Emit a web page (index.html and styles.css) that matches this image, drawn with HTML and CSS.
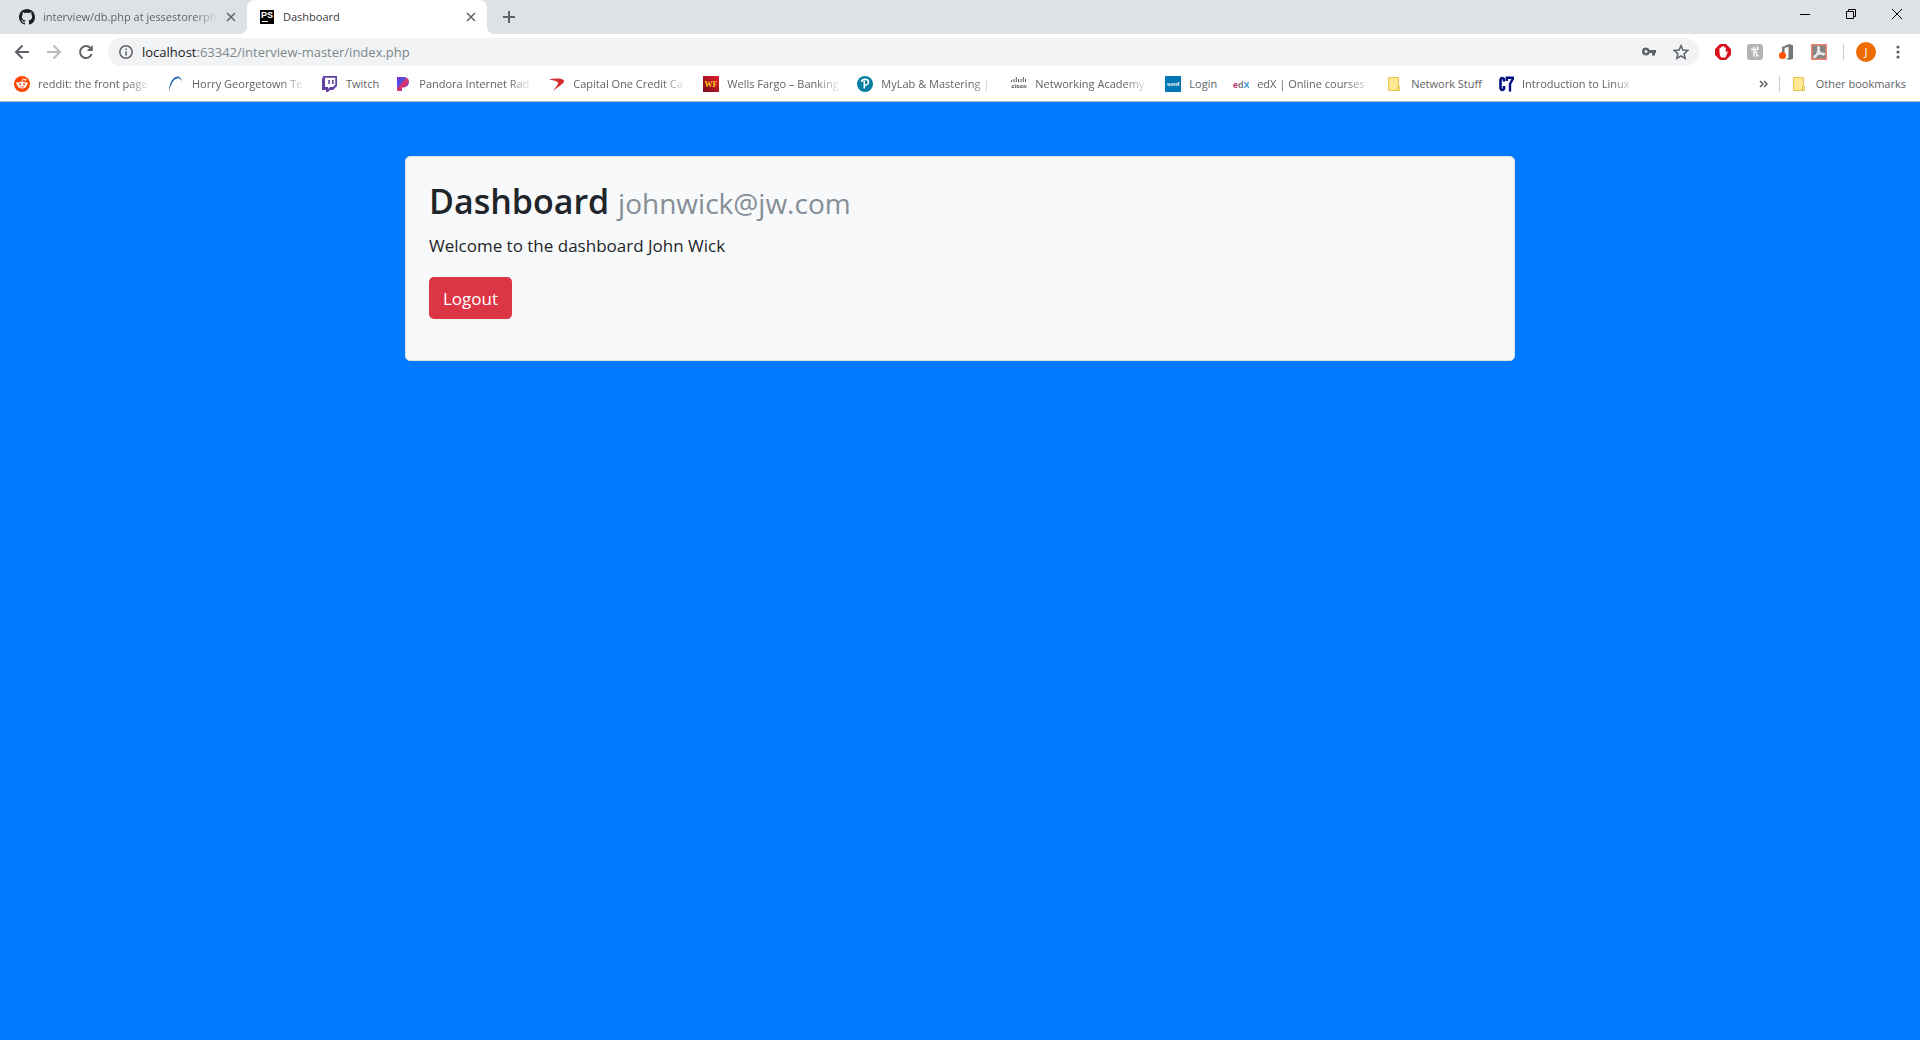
FILE: index.html
```html
<!DOCTYPE html>
<html lang="en">
<head>
<meta charset="utf-8">
<title>Dashboard</title>
<link rel="stylesheet" href="styles.css">
</head>
<body>
<header class="browser">
  <div class="tabstrip">
    <div class="tab">
      <svg class="icon" viewBox="0 0 16 16" aria-hidden="true"><path fill="#1b1f23" d="M8 0C3.580 0 0 3.580 0 8c0 3.540 2.290 6.530 5.470 7.590.4.070.55-.17.55-.38 0-.19-.01-.82-.01-1.490-2.010.37-2.530-.49-2.690-.94-.09-.23-.48-.94-.82-1.130-.28-.15-.68-.52-.01-.53.63-.01 1.080.58 1.230.82.72 1.210 1.870.87 2.330.66.070-.52.28-.87.51-1.070-1.780-.2-3.640-.89-3.640-3.950 0-.87.31-1.590.82-2.150-.08-.2-.36-1.020.08-2.120 0 0 .67-.21 2.200.82.64-.18 1.320-.27 2-.27s1.360.09 2 .27c1.530-1.040 2.200-.82 2.200-.82.44 1.100.16 1.920.08 2.120.51.56.82 1.270.82 2.150 0 3.070-1.870 3.750-3.650 3.950.29.25.54.73.54 1.480 0 1.070-.01 1.930-.01 2.200 0 .21.15.46.55.38A8.010 8.010 0 0 0 16 8c0-4.420-3.580-8-8-8z"/></svg>
      <span class="tab-title fade">interview/db.php at jessestorerph</span>
      <button class="tab-close" aria-label="Close tab"><svg width="10" height="10" viewBox="0 0 10 10"><path d="M1 1l8 8M9 1L1 9"/></svg></button>
    </div>
    <div class="tab tab-active">
      <svg class="icon" viewBox="0 0 16 16" aria-hidden="true"><path d="M1 1h14v14H1z"/><path d="M3 12.500h6" stroke="#fff"/><text class="ps" x="2" y="9">PS</text></svg>
      <span class="tab-title">Dashboard</span>
      <button class="tab-close" aria-label="Close tab"><svg width="10" height="10" viewBox="0 0 10 10"><path d="M1 1l8 8M9 1L1 9"/></svg></button>
    </div>
    <button class="new-tab" aria-label="New tab"><svg width="12" height="12" viewBox="0 0 12 12"><path d="M6 0v12M0 6h12"/></svg></button>
    <div class="window-controls">
      <button aria-label="Minimize"><svg width="10" height="10" viewBox="0 0 10 10"><path d="M0 5.500h10"/></svg></button>
      <button aria-label="Restore"><svg width="10" height="10" viewBox="0 0 10 10"><path d="M.5 2.500h7v7h-7zM2.500 2.500v-2h7v7h-2"/></svg></button>
      <button aria-label="Close"><svg width="10" height="10" viewBox="0 0 10 10"><path d="M0 0l10 10M10 0L0 10"/></svg></button>
    </div>
  </div>

  <div class="toolbar">
    <nav class="history">
      <button aria-label="Back"><svg width="16" height="16" viewBox="0 0 16 16"><path d="M15 8H2M8.500 1.500L2 8l6.500 6.500"/></svg></button>
      <button class="disabled" aria-label="Forward"><svg width="16" height="16" viewBox="0 0 16 16"><path d="M1 8h13M7.500 1.500L14 8l-6.500 6.500"/></svg></button>
      <button aria-label="Reload"><svg width="16" height="16" viewBox="0 0 16 16"><path d="M13.700 10A6 6 0 1 1 12.500 4"/><path d="M14.800 1v6H8.800z" class="solid"/></svg></button>
    </nav>
    <div class="omnibox">
      <svg class="info" width="14" height="14" viewBox="0 0 14 14" aria-hidden="true"><circle cx="7" cy="7" r="6.200"/><path d="M7 6.200v4.300M7 3.500V5"/></svg>
      <a class="url" href="#"><span class="host">localhost</span>:63342/interview-master/index.php</a>
      <button aria-label="Saved passwords"><svg width="16" height="16" viewBox="0 0 16 16"><path class="solid" fill-rule="evenodd" d="M5 3.500a4 4 0 1 0 3.700 5.500H11v2.500h3V9h1V6H8.700A4 4 0 0 0 5 3.500zM5 6a1.500 1.500 0 1 1 0 3 1.500 1.500 0 0 1 0-3z"/></svg></button>
      <button aria-label="Bookmark this page"><svg width="16" height="16" viewBox="0 0 16 16"><path class="thin" d="M8 1.600l1.900 4.500 4.900.4-3.700 3.200 1.100 4.700L8 11.900l-4.200 2.500 1.100-4.700L1.200 6.500l4.900-.4z"/></svg></button>
    </div>
    <div class="extensions">
      <button aria-label="Ad blocker"><svg width="16" height="16" viewBox="0 0 16 16"><path fill="#d8131b" d="M5 0h6l5 5v6l-5 5H5l-5-5V5z"/><path fill="#fff" d="M4.500 8V4.200q.8-1 1.500 0V3q.8-1 1.600 0v-.4q.8-1 1.600 0V3.500q.8-.8 1.600.2v5l1.200-1.400q1.100 0 .7 1L10.500 13.500H6.200Q4.500 12 4.500 8z"/></svg></button>
      <button aria-label="Coupons"><svg width="16" height="16" viewBox="0 0 16 16"><rect width="16" height="16" rx="3" fill="#b3b4b6"/><path fill="none" stroke="#fff" stroke-width="1.400" d="M4 5.500h6.500q1.500-2.200-.7-2.200M7 3v9.500M7 9q2.700-2 2.700 0v2.800h1.800"/></svg></button>
      <button aria-label="Office"><svg width="16" height="16" viewBox="0 0 16 16"><path fill="#777" d="M3 3L10 0l4 1.200v13.500L10 16l-3-1.500 2.500-.5V2.800L5.500 4v5L3 10z"/><circle cx="3.500" cy="11.500" r="3.500" fill="#ff5200"/></svg></button>
      <button aria-label="PDF"><svg width="16" height="16" viewBox="0 0 16 16"><path fill="#858585" stroke="#ef8172" d="M.5.500h15v15H.5z"/><path fill="none" stroke="#eee" d="M7.500 3c-1 0 0 3.500 1.500 5.500s4 2.500 4 1.500-6-.5-8.500 1.500-.5 2 .5.700S8.800 3 7.500 3z"/></svg></button>
    </div>
    <span class="divider"></span>
    <button class="avatar" aria-label="Profile">J</button>
    <button class="menu" aria-label="Menu"><svg width="4" height="14" viewBox="0 0 4 14"><circle cx="2" cy="2" r="1.600"/><circle cx="2" cy="7" r="1.600"/><circle cx="2" cy="12" r="1.600"/></svg></button>
  </div>

  <nav class="bookmarks">
    <a href="#"><svg class="icon" viewBox="0 0 16 16"><circle cx="8" cy="8" r="8" fill="#ff4500"/><path d="M8.200 5.500l.6-2.500 2.500.6" fill="none" stroke="#fff" stroke-width=".8"/><circle cx="11.500" cy="3.700" r="1" fill="#fff"/><circle cx="3.500" cy="7.500" r="1.300" fill="#fff"/><circle cx="12.500" cy="7.500" r="1.300" fill="#fff"/><ellipse cx="8" cy="9" rx="4.800" ry="3.500" fill="#fff"/><circle cx="6" cy="8.300" r="1" fill="#ff4500"/><circle cx="10" cy="8.300" r="1" fill="#ff4500"/><path d="M6 10.600q2 1.200 4 0" fill="none" stroke="#ff4500" stroke-width=".7"/></svg><span class="fade">reddit: the front page</span></a>
    <a href="#"><svg class="icon" viewBox="0 0 16 16"><path fill="#1f62ad" d="M1 15.500C1 7 5 1 9.500.5c2.500 0 4 2 4.500 5C12.500 2.500 11 2 9 2.500 5.500 3.200 3 8 1 15.500z"/></svg><span class="fade">Horry Georgetown Te</span></a>
    <a href="#"><svg class="icon" viewBox="0 0 16 16"><path fill="#6441a4" fill-rule="evenodd" d="M1.300 0H15v10l-4 4H8l-2 2H4v-2H0V3zM3 1.800V11h3v2l2-2h3l2.300-2.300V1.800zM6.300 4h1.600v4H6.300zM10 4h1.600v4H10z"/></svg><span>Twitch</span></a>
    <a href="#"><svg class="icon" viewBox="0 0 16 16"><defs><linearGradient id="pandora" x2="1" y2="1"><stop stop-color="#7b2fd0"/><stop offset=".35" stop-color="#4a50e0"/><stop offset=".5" stop-color="#ee2f5b"/><stop offset=".7" stop-color="#a0369c"/><stop offset="1" stop-color="#3478ef"/></linearGradient></defs><path fill="url(#pandora)" d="M2 1h6c4 0 6 2 6 5s-2.500 5.500-6 5.500H7V15H2z"/></svg><span class="fade">Pandora Internet Rad</span></a>
    <a href="#"><svg class="icon" viewBox="0 0 16 16"><path fill="#d22e2f" d="M0 3.200C6 2 14 2 15 4.500S9 11 4 15c3-4 5.500-7 5-8.500S4 4.300 0 3.200z"/></svg><span class="fade">Capital One Credit Ca</span></a>
    <a href="#"><svg class="icon" viewBox="0 0 16 16"><defs><linearGradient id="wells" x1="1" x2="0" y2="1"><stop stop-color="#e61c2a"/><stop offset="1" stop-color="#79101b"/></linearGradient></defs><path fill="url(#wells)" d="M0 0h16v16H0z"/><text class="wf" x="8" y="11">WF</text></svg><span class="fade">Wells Fargo – Banking</span></a>
    <a href="#"><svg class="icon" viewBox="0 0 16 16"><circle cx="8" cy="8" r="8" fill="#087ea4"/><path d="M4.500 6C5 2.500 11.500 2.500 11.500 6c0 2.500-2.500 3.500-4.500 3M7.300 5v7.500" fill="none" stroke="#fff" stroke-width="1.600"/></svg><span class="fade">MyLab &amp; Mastering |</span></a>
    <a href="#"><svg class="icon" viewBox="0 0 16 16"><path d="M.7 4v2M3 3v3M5.300 1v5M7.500 3v3M10 3v3M12.300 1v5M14.500 3v3" stroke="#555"/><text class="cisco" x="8" y="12">cisco</text></svg><span class="fade">Networking Academy</span></a>
    <a href="#"><svg class="icon" viewBox="0 0 16 16"><rect width="16" height="16" rx="1" fill="#0077b3"/><text class="sonf" x="8" y="10">sonf</text></svg><span>Login</span></a>
    <a href="#"><svg class="icon" viewBox="0 0 16 16"><text class="edx" x="0" y="12"><tspan fill="#b52a67">e</tspan><tspan fill="#777">d</tspan><tspan fill="#2b8fd7">X</tspan></text></svg><span class="fade">edX | Online courses</span></a>
    <a href="#"><svg class="icon" viewBox="0 0 16 16"><path class="folder" d="M1.500 1.500h10v9h1v4h-11zM10.500 14.500v-4"/></svg><span>Network Stuff</span></a>
    <a href="#"><svg class="icon" viewBox="0 0 16 16"><path d="M6 5.500V3.200Q3.800.8 2.500 3.500v9Q3.800 15.200 6 12.800V10" fill="none" stroke="#000f80" stroke-width="2.600"/><path d="M8.800 5V1.800h6V3L12 8v7.500" fill="none" stroke="#000f80" stroke-width="2.400"/></svg><span class="fade">Introduction to Linux</span></a>
    <button class="more" aria-label="More bookmarks"><svg width="10" height="8" viewBox="0 0 10 8"><path d="M1 1l3 3-3 3M5 1l3 3-3 3"/></svg></button>
    <span class="divider"></span>
    <a href="#"><svg class="icon" viewBox="0 0 16 16"><path class="folder" d="M1.500 1.500h10v9h1v4h-11zM10.500 14.500v-4"/></svg><span>Other bookmarks</span></a>
  </nav>
</header>

<main class="container">
  <section class="card">
    <h2>Dashboard <small>johnwick@jw.com</small></h2>
    <p>Welcome to the dashboard John Wick</p>
    <button class="logout">Logout</button>
  </section>
</main>
</body>
</html>
```
FILE: styles.css
```css
* { box-sizing: border-box; }

body {
  margin: 0;
  min-height: 100vh;
  background: #007bff;
  color: #212529;
  font-family: "Open Sans", "Segoe UI", sans-serif;
}

button {
  margin: 0;
  padding: 0;
  border: 0;
  background: none;
  font: inherit;
}

a { color: inherit; text-decoration: none; }
svg { display: block; flex: none; }

/* Browser chrome */
.browser {
  background: #fff;
  border-bottom: 1px solid #b6b4b6;
  color: #5f6368;
  font-size: 11px;
  line-height: 16px;
}

.browser button svg { fill: none; stroke: #5f6368; stroke-width: 2; }
.browser .solid { fill: #5f6368; stroke: none; }
.browser .thin { stroke-width: 1.5; }
.icon { width: 16px; height: 16px; }

.fade {
  -webkit-mask-image: linear-gradient(to left, transparent, #000 24px);
  mask-image: linear-gradient(to left, transparent, #000 24px);
}

.tabstrip {
  display: flex;
  height: 34px;
  padding-left: 7px;
  background: #dee1e6;
}

.tab {
  position: relative;
  display: flex;
  align-items: center;
  gap: 8px;
  width: 240px;
  padding: 0 11px 0 12px;
}

.tab-active {
  background: #fff;
  border-radius: 8px 8px 0 0;
  color: #3c4043;
}

.tab-active::before,
.tab-active::after {
  content: "";
  position: absolute;
  bottom: 0;
  width: 8px;
  height: 8px;
}
.tab-active::before { right: 100%; background: radial-gradient(circle at 0 0, transparent 8px, #fff 8px); }
.tab-active::after { left: 100%; background: radial-gradient(circle at 100% 0, transparent 8px, #fff 8px); }

.tab-title { flex: 1; min-width: 0; overflow: hidden; white-space: nowrap; }
.browser .tab-close svg { stroke-width: 1.5; }
.new-tab { padding: 0 16px; }

.window-controls { display: flex; margin-left: auto; }
.window-controls button { width: 46px; padding: 0 18px 6px; }
.browser .window-controls svg { stroke: #000; stroke-width: 1; }

.toolbar { display: flex; align-items: center; height: 36px; padding: 0 20px 0 14px; }
.history { display: flex; gap: 16px; margin-right: 14px; }
.browser .disabled svg { stroke: #babcbe; }

.omnibox {
  flex: 1;
  display: flex;
  align-items: center;
  gap: 16px;
  height: 28px;
  padding: 0 10px 0 11px;
  border-radius: 14px;
  background: #f1f3f4;
}
.info { fill: none; stroke: #5f6368; stroke-width: 1.5; margin-right: -7px; }
.url { flex: 1; color: #80868b; font-size: 13px; }
.host { color: #202124; }

.extensions { display: flex; gap: 16px; margin: 0 16px; }
.browser .extensions svg { stroke: none; }
.divider { width: 1px; height: 16px; background: #c8cacd; }

.avatar {
  width: 20px;
  height: 20px;
  margin: 0 20px 0 12px;
  border-radius: 50%;
  background: #ef6c00;
  color: #fff;
}
.browser .menu svg { fill: #5f6368; stroke: none; }

.bookmarks { display: flex; align-items: center; gap: 16px; height: 31px; padding: 0 14px 3px; }
.bookmarks a { display: flex; align-items: center; gap: 8px; }
.bookmarks span { white-space: nowrap; }
.bookmarks .fade { width: 114px; overflow: hidden; }
.bookmarks .divider { margin: 0 -4px 0 -6px; }
.browser .more { margin-left: auto; }
.browser .more svg { stroke-width: 1.5; }
.folder { fill: #ffe793; stroke: #e8c34c; }

.ps, .wf, .cisco, .sonf, .edx { font-family: "Liberation Sans", sans-serif; font-weight: bold; }
.ps { fill: #fff; font-size: 9px; }
.wf { fill: #ffcd11; font-family: "Liberation Serif", serif; font-size: 8px; text-anchor: middle; }
.cisco { fill: #444; font-size: 6px; text-anchor: middle; }
.sonf { fill: #fff; font-size: 6px; text-anchor: middle; }
.edx { font-size: 9px; }

/* Page */
.container { max-width: 1140px; margin: 0 auto; padding: 54px 15px; }

.card {
  padding: 23px 23px 41px;
  border: 1px solid #dfe2e6;
  border-radius: 5px;
  background: #f8f9fa;
  font-size: 17px;
  line-height: 27px;
}
.card h2 { margin: 0 0 9px; font-size: 34px; font-weight: 600; line-height: 43px; }
.card small { color: #868e96; font-size: 28px; font-weight: 400; line-height: 28px; }
.card p { margin: 0 0 18px; }

.logout {
  height: 42px;
  padding: 0 14px;
  border-radius: 5px;
  background: #dc3545;
  color: #fff;
}
```
